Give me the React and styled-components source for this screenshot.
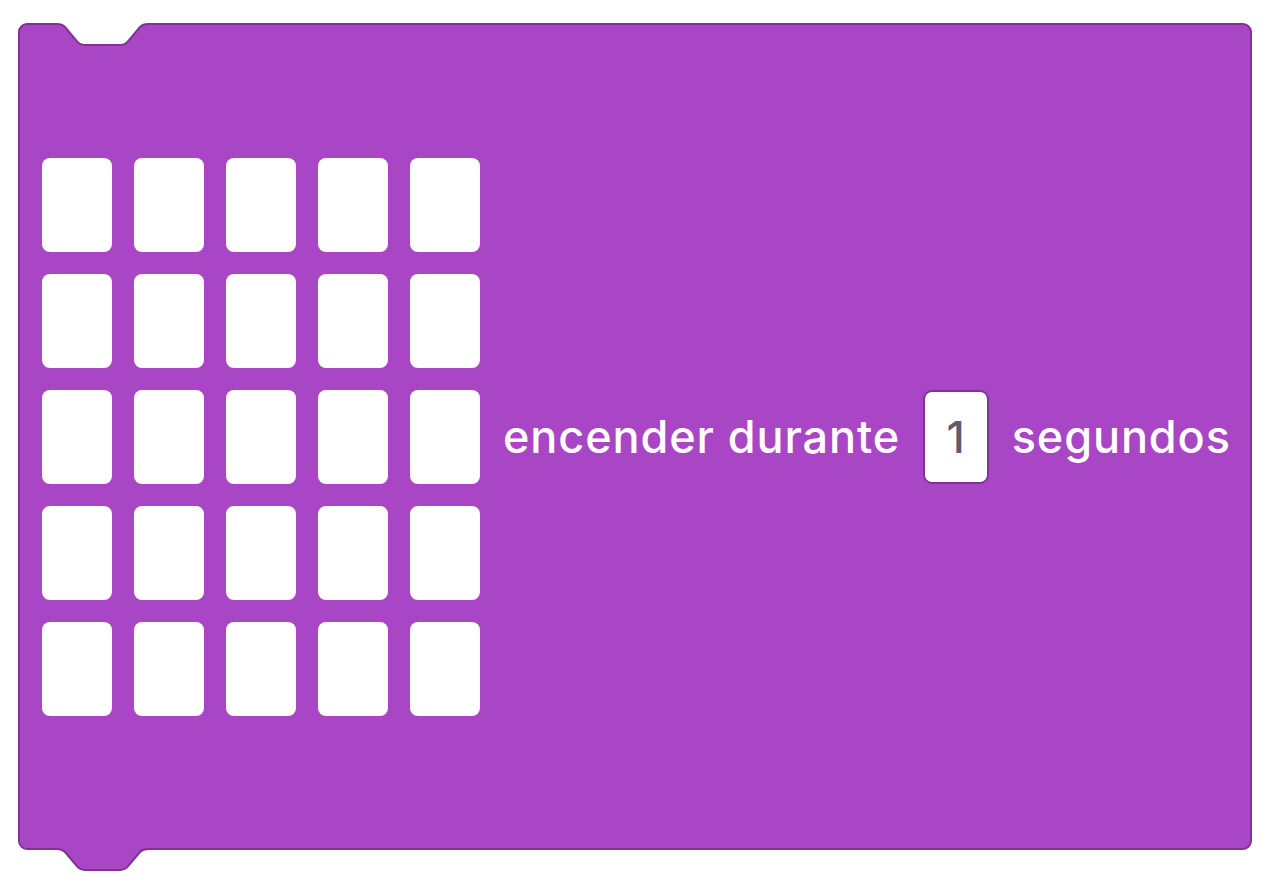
import React from "react";
import styled, { createGlobalStyle } from "styled-components";

const Global = createGlobalStyle`
  html, body { margin: 0; padding: 0; background: #ffffff; }
  body { font-family: Inter, "Noto Sans", sans-serif; }
`;

const FILL = "#a946c5";
const EDGE = "#7e3395";

const Page = styled.div`
  width: 1276px;
  height: 890px;
  padding: 23px 0 0 18px;
  box-sizing: border-box;
`;

const Block = styled.div`
  position: relative;
  box-sizing: border-box;
  width: 1234px;
  height: 827px;
  background: ${FILL};
  border: 2px solid ${EDGE};
  border-radius: 9px;
  display: flex;
  align-items: center;
  gap: 23px;
  padding-left: 22px;
`;

const Notch = styled.svg`
  position: absolute;
  left: 37px;
  width: 92px;
  overflow: visible;
  ${(p) => (p.$bottom ? "bottom: -26px; height: 26px;" : "top: -2px; height: 25px;")}
`;

const LedGrid = styled.div`
  display: grid;
  grid-template-columns: repeat(5, 70px);
  grid-auto-rows: 94px;
  column-gap: 22px;
  row-gap: 22px;
`;

const Led = styled.div`
  background: #ffffff;
  border-radius: 8px;
`;

const Label = styled.span`
  font-family: Inter, "Noto Sans", sans-serif;
  font-size: 45px;
  font-weight: 500;
  color: #ffffff;
  white-space: nowrap;
  letter-spacing: 0.9px;
  margin-right: -0.4px;
`;

const NumberField = styled.div`
  box-sizing: border-box;
  width: 66px;
  height: 94px;
  background: #ffffff;
  border: 2px solid ${EDGE};
  border-radius: 9px;
  display: flex;
  align-items: center;
  justify-content: center;
  font-family: Inter, "Noto Sans", sans-serif;
  font-size: 44px;
  font-weight: 500;
  color: #575e75;
`;

const CURVE = "C4,1 6,2 8,4 L19,17 C21,20 24,22 28,22 H63 C67,22 70,20 72,17 L83,4 C85,2 87,1 91,1";

export default function App() {
  const leds = Array.from({ length: 25 }, (_, i) => i);
  return (
    <>
      <Global />
      <Page>
        <Block>
          <Notch $top viewBox="0 0 92 25">
            <path d={`M0,0 L0,1 ${CURVE} L91,0 Z`} fill="#ffffff" />
            <path d={`M-1,1 L0,1 ${CURVE} L92,1`} fill="none" stroke={EDGE} strokeWidth="2" />
          </Notch>
          <Notch $bottom viewBox="0 0 92 26">
            <path d={`M0,0 L0,1 ${CURVE} L91,0 Z`} fill={FILL} />
            <path d={`M0,1 ${CURVE}`} fill="none" stroke={EDGE} strokeWidth="2" />
          </Notch>
          <LedGrid>
            {leds.map((i) => (
              <Led key={i} />
            ))}
          </LedGrid>
          <Label>encender durante</Label>
          <NumberField>1</NumberField>
          <Label>segundos</Label>
        </Block>
      </Page>
    </>
  );
}
